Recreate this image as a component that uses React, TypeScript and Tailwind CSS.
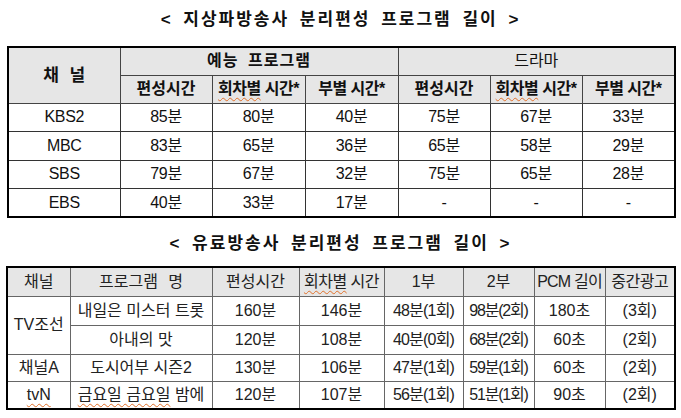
import React from "react";

const font = { fontFamily: "'Liberation Sans', 'Noto Sans CJK KR', sans-serif" };

const Sq = ({ children }: { children: React.ReactNode }) => (
  <span className="underline decoration-wavy decoration-[#e0702a] decoration-1 underline-offset-[3px]">{children}</span>
);

const topRows = [
  ["KBS2", "85분", "80분", "40분", "75분", "67분", "33분"],
  ["MBC", "83분", "65분", "36분", "65분", "58분", "29분"],
  ["SBS", "79분", "67분", "32분", "75분", "65분", "28분"],
  ["EBS", "40분", "33분", "17분", "-", "-", "-"],
];

export default function App() {
  const th = "border border-[#444] bg-[#e6e6e6] font-bold text-[16px] text-[#111] p-0 text-center";
  const td = "border border-[#333] text-[16px] text-[#111] p-0 text-center font-normal tracking-[-0.3px]";
  const th2 = "border border-[#666] bg-[#e6e6e6] font-normal text-[16px] text-[#222] p-0 text-center whitespace-nowrap";
  const td2 = "border border-[#666] text-[16px] text-[#222] p-0 text-center whitespace-nowrap";
  return (
    <div className="w-[681px] h-[418px] bg-white overflow-hidden" style={font}>
      <div className="h-[40px] flex items-center justify-center">
        <span className="font-bold text-[17px] tracking-[2px] text-[#111] [word-spacing:4px]">&lt; 지상파방송사 분리편성 프로그램 길이 &gt;</span>
      </div>
      <div className="mt-[6px] ml-[7px]">
        <table className="border-collapse table-fixed w-[667px] border-2 border-black">
          <colgroup>
            <col className="w-[112px]" />
            <col className="w-[92px]" />
            <col className="w-[93px]" />
            <col className="w-[93px]" />
            <col className="w-[92px]" />
            <col className="w-[92px]" />
            <col className="w-[93px]" />
          </colgroup>
          <thead>
            <tr className="h-[28px]">
              <th rowSpan={2} className={th + " text-[17px] [word-spacing:6px]"}>채 널</th>
              <th colSpan={3} className={th + " tracking-[1px] [word-spacing:4px]"}>예능 프로그램</th>
              <th colSpan={3} className={th + " font-normal"}>드라마</th>
            </tr>
            <tr className="h-[28px]">
              <th className={th}>편성시간</th>
              <th className={th + " whitespace-nowrap tracking-[-0.5px]"}><Sq>회차별</Sq> 시간*</th>
              <th className={th + " whitespace-nowrap tracking-[-0.5px]"}>부별 시간*</th>
              <th className={th}>편성시간</th>
              <th className={th + " whitespace-nowrap tracking-[-0.5px]"}><Sq>회차별</Sq> 시간*</th>
              <th className={th + " whitespace-nowrap tracking-[-0.5px]"}>부별 시간*</th>
            </tr>
          </thead>
          <tbody>
            {topRows.map((r, i) => (
              <tr key={i} className="h-[28.5px]">
                {r.map((c, j) => (
                  <td key={j} className={td}>{c}</td>
                ))}
              </tr>
            ))}
          </tbody>
        </table>
      </div>
      <div className="h-[48px] pt-[4px] flex items-center justify-center">
        <span className="font-bold text-[17px] tracking-[2px] text-[#111] [word-spacing:4px]">&lt; 유료방송사 분리편성 프로그램 길이 &gt;</span>
      </div>
      <div className="ml-[6px]">
        <table className="border-collapse table-fixed w-[668px] border-2 border-black">
          <colgroup>
            <col className="w-[63px]" />
            <col className="w-[142px]" />
            <col className="w-[87px]" />
            <col className="w-[85px]" />
            <col className="w-[79px]" />
            <col className="w-[71px]" />
            <col className="w-[71px]" />
            <col className="w-[70px]" />
          </colgroup>
          <thead>
            <tr className="h-[29px]">
              <th className={th2}>채널</th>
              <th className={th2 + " [word-spacing:6px]"}>프로그램 명</th>
              <th className={th2}>편성시간</th>
              <th className={th2 + " tracking-[-0.5px]"}><Sq>회차별</Sq> 시간</th>
              <th className={th2}>1부</th>
              <th className={th2}>2부</th>
              <th className={th2 + " tracking-[-0.8px]"}>PCM 길이</th>
              <th className={th2 + " tracking-[-0.5px]"}>중간광고</th>
            </tr>
          </thead>
          <tbody>
            <tr className="h-[29px]">
              <td rowSpan={2} className={td2}>TV조선</td>
              <td className={td2}>내일은 미스터 트롯</td>
              <td className={td2}>160분</td>
              <td className={td2}>146분</td>
              <td className={td2 + " tracking-[-0.8px]"}>48분(1회)</td>
              <td className={td2 + " tracking-[-1.2px]"}>98분(2회)</td>
              <td className={td2}>180초</td>
              <td className={td2}>(3회)</td>
            </tr>
            <tr className="h-[29px]">
              <td className={td2}>아내의 맛</td>
              <td className={td2}>120분</td>
              <td className={td2}>108분</td>
              <td className={td2 + " tracking-[-0.8px]"}>40분(0회)</td>
              <td className={td2 + " tracking-[-1.2px]"}>68분(2회)</td>
              <td className={td2}>60초</td>
              <td className={td2}>(2회)</td>
            </tr>
            <tr className="h-[27px]">
              <td className={td2}>채널A</td>
              <td className={td2}>도시어부 시즌2</td>
              <td className={td2}>130분</td>
              <td className={td2}>106분</td>
              <td className={td2 + " tracking-[-0.8px]"}>47분(1회)</td>
              <td className={td2 + " tracking-[-1.2px]"}>59분(1회)</td>
              <td className={td2}>60초</td>
              <td className={td2}>(2회)</td>
            </tr>
            <tr className="h-[28px]">
              <td className={td2}><Sq>tvN</Sq></td>
              <td className={td2}><Sq>금요일 금요일</Sq> 밤에</td>
              <td className={td2}>120분</td>
              <td className={td2}>107분</td>
              <td className={td2 + " tracking-[-0.8px]"}>56분(1회)</td>
              <td className={td2 + " tracking-[-1.2px]"}>51분(1회)</td>
              <td className={td2}>90초</td>
              <td className={td2}>(2회)</td>
            </tr>
          </tbody>
        </table>
      </div>
    </div>
  );
}
